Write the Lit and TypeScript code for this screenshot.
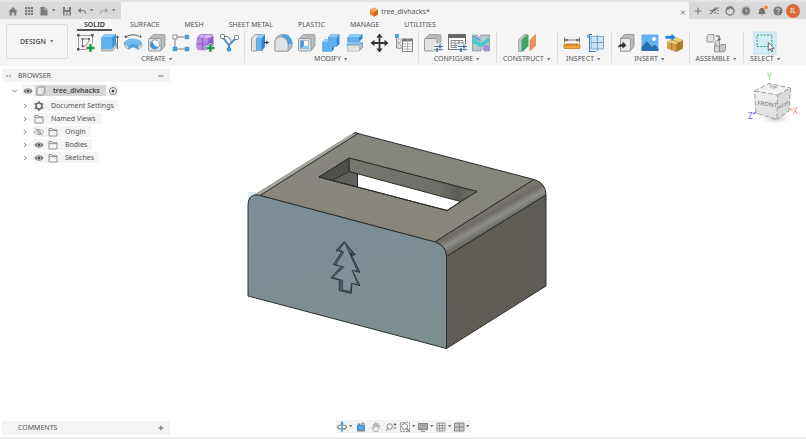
import { LitElement, html, svg, css } from "lit";
import { customElement } from "lit/decorators.js";

const icon = (size: number, body: unknown) =>
  html`<svg width=${size} height=${size} viewBox="0 0 ${size} ${size}" fill="none" aria-hidden="true">${body}</svg>`;

const caret = html`<svg class="caret" width="5" height="3" viewBox="0 0 5 3" aria-hidden="true"><path d="M1 0h3.4L2.7 2.4z" fill="#777" /></svg>`;

/* ---- ribbon icons, 24 x 24 ---- */
const plusBadge = svg`<path d="M17.5 13v8M13.5 17h8" stroke="#1f9a48" stroke-width="2.4"/>`;
const greyBox = svg`
  <path d="M4 8l4-4.5h10.5c1 0 1.5.5 1.5 1.5v10l-4 4.5z" fill="#b9bdc0" stroke="#85898c" stroke-width=".7"/>
  <rect x="3.5" y="7.5" width="12.5" height="12.5" rx="1" fill="#dfe1e2" stroke="#85898c" stroke-width=".8"/>`;

const ribbonIcons: Record<string, unknown> = {
  sketch: svg`<path d="M5.500 4.500h14M5.500 4.500v14h8M19.500 4.500v8" stroke="#888" stroke-width=".8"/>
    <path d="M9.500 15.500v-7.500h6.500c0 4-2.500 7-6.500 7.500z" stroke="#666" stroke-width=".8"/>
    <g fill="#555"><path d="M4 3h2.500v2.500H4zM18.200 3h2.500v2.500h-2.500zM4 17h2.500v2.500H4zM8.700 7h1.800v1.800H8.700zM8.700 14.500h1.800v1.800H8.700zM15 7h1.800v1.800H15z"/></g>${plusBadge}`,
  extrude: svg`<path d="M4.500 15.500v4.500h11l4-4v-4z" fill="#c7cacc" stroke="#888" stroke-width=".6"/>
    <path d="M4.500 6.500l3-3.500h11.500v10l-3.800 4.500H4.500z" fill="#3b93d8"/>
    <rect x="4.500" y="6.300" width="10.800" height="11.300" fill="#5fb1ee"/><path d="M4.500 6.300l3-3.300H19l-3.700 3.300z" fill="#8ccaf5"/>
    <path d="M20.500 5v13M19.300 6.800l1.200-2.200 1.200 2.200" stroke="#444" stroke-width=".8"/>`,
  revolve: svg`<path d="M3 13c1-7 17-7 18 0l-4 6c-2-3-6-3.500-9-.5z" fill="#4c9fe0"/>
    <path d="M3 12.500c1-6.500 17-6.500 18 0l-3.800 2.800c-3-3.300-7.500-3-9.600.2z" fill="#72bbf0"/>
    <path d="M3 12.500l4.600 3 .4 3L4 16z" fill="#d7d9db" stroke="#888" stroke-width=".5"/><path d="M21 12.500l-4 3v3.500l3.500-3z" fill="#d7d9db" stroke="#888" stroke-width=".5"/>
    <path d="M4 6.500c4-3.500 12-3.500 16 0M4 6.500l.4-2.200M4 6.500l2.400-.2M20 6.500l-.4-2.200" stroke="#444" stroke-width=".9"/>`,
  hole: svg`${greyBox}<circle cx="9.800" cy="13.500" r="4.600" fill="#fff" stroke="#777" stroke-width=".7"/>
    <path d="M7.600 10a4.300 4.300 0 1 0 6 5.600c-3 .4-5.600-2-6-5.600z" fill="#3c96db"/>`,
  pattern: svg`<path d="M8 6h8M6 8v8M8 18h8" stroke="#777" stroke-width=".9"/>
    <rect x="4" y="4" width="4" height="4" fill="#fff" stroke="#777" stroke-width=".8"/>
    <g fill="#4ba3e4" stroke="#2e7fc0" stroke-width=".4"><path d="M16 4h4v4h-4zM4 16h4v4H4zM16 16h4v4h-4z"/></g>`,
  form: svg`<path d="M4 8c1-4 3-5 7-5h6c3 0 3.500 1.500 3.500 4v6c0 4-3 5.500-6 6H7c-3 0-3.500-2-3.500-5z" fill="#8d5cc8"/>
    <rect x="3.800" y="7.200" width="11.600" height="12" rx="2.500" fill="#b58ae2"/>
    <path d="M5 6.500C7 4 9 3.600 12 3.600h5c1.500 0 2.600.6 2.800 1.600L15.500 7.400z" fill="#d3b7f0"/>
    <path d="M9.600 7.200v12M3.800 13h11.600M15.400 13l5-2.500M12 3.600L9.600 7.200" stroke="#7a46b6" stroke-width=".6"/>
    <path d="M17.500 12.500v8.500M13.300 16.800h8.500" stroke="#fff" stroke-width="3.400"/>${plusBadge}`,
  derive: svg`<path d="M5.500 6l5 6.500c.8 1.500 2.200 1.500 3 0L19.500 6.500M12 13v5" stroke="#4a90cc" stroke-width="2"/>
    <path d="M7.500 5.500h3.500l3.500 5" stroke="#555" stroke-width=".8"/>
    <g fill="#fff" stroke="#555" stroke-width=".8"><rect x="3.500" y="3.500" width="4" height="4" rx="1"/><rect x="17.500" y="4.500" width="4" height="4" rx="1"/></g>
    <circle cx="12" cy="18.500" r="1.900" fill="#4ba3e4" stroke="#2e6ea8" stroke-width=".6"/>`,
  pressPull: svg`<path d="M4.500 7l3.500-3.500h5L9.500 8v12h-5z" fill="#dfe1e2" stroke="#85898c" stroke-width=".8"/>
    <path d="M9.500 7.500L12.500 3.500H18v12L15 20H9.500z" fill="#2f86cc"/><path d="M9.500 7.500h5V20h-5z" fill="#62b2ee"/><path d="M9.500 7.500l3-4H18l-3.500 4z" fill="#8ccaf5"/>
    <path d="M16.500 11.500h4" stroke="#333" stroke-width="1"/><path d="M19.300 9.500l2.700 2-2.700 2z" fill="#333"/>`,
  fillet: svg`<path d="M4 20v-9c0-4 3.500-7.500 7.500-7.500l5.500.7 4 7v4.500L17.500 20z" fill="#b9bdc0" stroke="#85898c" stroke-width=".8"/>
    <path d="M4 20v-8.500C4 8 6.500 6 9.500 6c4 0 7.500 3 7.500 7.500V20z" fill="#e0e2e3" stroke="#85898c" stroke-width=".6"/>
    <path d="M9.500 5.500L13 3.200c5 0 8.500 4.800 8.500 9.300L17 13.500c0-4.500-3.500-8-7.500-8z" fill="#4ba3e4"/>`,
  shell: svg`${greyBox}<rect x="5.700" y="9.800" width="8" height="8" fill="#fff" stroke="#888" stroke-width=".6"/>
    <path d="M5.700 9.800h3v5h5v3h-8z" fill="#8ccaf5"/><path d="M5.700 17.800l3-3.500v-4.500h-3z" fill="#3c96db"/>`,
  combine: svg`<path d="M3.500 11l2.500-3h3V6l2.500-2.500H20.500V13L18 15.500h-3V18l-2 2.500H3.500z" fill="#2f86cc"/>
    <path d="M3.500 11H9V6.500h8.800v9H13v5H3.500z" fill="#5dafed"/><path d="M9 6.500l2.500-3h9l-2.700 3zM3.500 11L6 8h3v3z" fill="#8ccaf5"/>`,
  split: svg`<path d="M4.500 14.500L7 12.500h12.500v4L16 20H4.500z" fill="#b9bdc0" stroke="#85898c" stroke-width=".7"/><path d="M4.500 14.800H16V20H4.500z" fill="#e0e2e3"/>
    <path d="M4.500 6.500l3-3.500h12v4.200L16 11H4.500z" fill="#2f86cc"/><path d="M4.500 6.500H16V11H4.500z" fill="#5dafed"/><path d="M4.500 6.500l3-3.500h12L16 6.500z" fill="#8ccaf5"/>
    <path d="M3.500 13.300L5.500 11.500h14.500L17 13.800H3.500z" fill="#8ccaf5" stroke="#4b90c4" stroke-width=".5"/>`,
  move: svg`<path d="M12.500 5v14M5.500 12h14" stroke="#333" stroke-width="1.800"/>
    <path d="M12.500 2.500l3.200 4H9.300zM12.500 21.500l3.200-4H9.300zM3.500 12l4-3.200v6.400zM21.500 12l-4-3.200v6.400z" fill="#333"/>`,
  params: svg`<path d="M5.500 7v10h6M5.500 12h4" stroke="#777" stroke-width=".8"/>
    <rect x="4" y="3" width="4" height="4" fill="#4ba3e4"/><rect x="7" y="8" width="3" height="3" fill="#fff" stroke="#888" stroke-width=".6"/><rect x="7" y="14" width="3" height="3" fill="#fff" stroke="#888" stroke-width=".6"/>
    <rect x="11.500" y="8" width="10" height="12.500" fill="#fff" stroke="#777" stroke-width=".9"/><path d="M11.500 8h10v2.500h-10z" fill="#777"/>
    <path d="M16.500 8v12.500M11.500 13h10M11.500 15.500h10M11.500 18h10" stroke="#999" stroke-width=".7"/>`,
  configBody: svg`${greyBox}<path d="M12.500 12.500h10v9h-10z" fill="#f5f5f5" opacity=".8"/><path d="M13 15.500h9M13 18.800h9" stroke="#4b6f90" stroke-width="1.100"/><path d="M19 13.500v4M16 17v4" stroke="#4b6f90" stroke-width="1.500"/>`,
  configTable: svg`<rect x="3.500" y="3.500" width="17" height="15" fill="#fff" stroke="#666" stroke-width=".9"/><path d="M3.500 3.500h17V7h-17z" fill="#666"/>
    <path d="M6 9.500h12M6 12h12M6 14.500h8M6 9.500v7h6M10 9.500v7M14 9.500v4M18 9.500v4" stroke="#666" stroke-width=".7"/>
    <path d="M12.500 13h10v8h-10z" fill="#f5f5f5" opacity=".9"/><path d="M13 15.500h9M13 18.800h9" stroke="#4b6f90" stroke-width="1.100"/><path d="M19 13.500v4M16 17v4" stroke="#4b6f90" stroke-width="1.500"/>`,
  configTheme: svg`<path d="M3.500 4h5c-1 3 4 3 3 0h9v16H15c1-3-4-3-3 0H3.500z" fill="#bcc7cc" stroke="#7d8a90" stroke-width=".7"/>
    <path d="M3.500 8c5-2 4.500 4 8.500 3.500 4-.5 4-5 8.500-4v4c-5 0-4 4.500-8.500 4.500-4 0-4-4-8.500-3z" fill="#4cc5cb"/><circle cx="17.500" cy="17" r="3" fill="#a988dd"/><path d="M3.500 6c4.500-1 5.500 4 8.500 3" stroke="#3c96db" stroke-width="1.200"/>`,
  plane: svg`<path d="M3.500 9L9 3.500h2.500V15L6 20.500H3.500z" fill="#c2c6c8" stroke="#85898c" stroke-width=".6"/><path d="M6.500 9l5.500-5.500h1.500V15L8 20.500H6.500z" fill="#3fa56a"/>
    <path d="M15 9l5.500-5.500V14.500L15 20z" fill="#e8935c" stroke="#c9733b" stroke-width=".5"/>`,
  measure: svg`<path d="M4.500 9h15M4.500 6.500v5M19.500 6.500v5" stroke="#555" stroke-width=".8"/><path d="M4.500 9l3-1.500v3zM19.500 9l-3-1.500v3z" fill="#555"/>
    <path d="M4 13h16v4.500H4z" fill="#f2a73a" stroke="#b9761d" stroke-width=".7"/><path d="M6.500 13v2M9 13v2M11.500 13v2M14 13v2M16.500 13v2" stroke="#8b5510" stroke-width=".6"/>`,
  section: svg`<path d="M7 5.500h12.500V18H7z" fill="#cfe6f7" stroke="#6d97b5" stroke-width=".8"/><path d="M7 11.500h12.500M13.300 3.500V20" stroke="#6d97b5" stroke-width=".9"/>
    <path d="M8 3.500H5.500v17H8M4 7V3.500M12 20.500h-4" stroke="#2f86cc" stroke-width="1.100"/>`,
  insertPart: svg`<path d="M6.500 7.500l4-4h9.500v12L16 20H6.500z" fill="#b9bdc0" stroke="#85898c" stroke-width=".8"/><rect x="6.500" y="7.500" width="9.800" height="12.500" fill="#e8eaeb" stroke="#85898c" stroke-width=".7"/>
    <path d="M4 16.500c.5-3 2-3.500 4.500-3.500v-2.500l4 3.700-4 3.600v-2c-2 0-3.500-.3-4.500.7z" fill="#333"/>`,
  picture: svg`<rect x="3.500" y="3.500" width="17" height="16.500" fill="#62b2ee"/><circle cx="16" cy="8" r="1.900" fill="#fff"/>
    <path d="M3.500 16l5.500-6 5 6 2.500-2.500 4 4V20h-17z" fill="#2a6fae"/>`,
  insertBox: svg`<path d="M5 10.500L13 6l8 3v8.500l-7 3.500-9-3.500z" fill="#d0a04c"/><path d="M5 10.500L13 6l8 3-7 4z" fill="#efcf84"/><path d="M14 13l7-4v8.500L14 21z" fill="#b3822e"/><path d="M8.500 8.500l8.500 3v7.500M9.500 12v7" stroke="#8a5e16" stroke-width=".5"/>
    <path d="M3.500 4.800h6v-2l4 3.500-4 3.500v-2h-6z" fill="#2386d2"/>`,
  assemble: svg`<path d="M3 5l1.500-1.500h5.500v6L8.500 11H3z" fill="#dfe1e2" stroke="#777" stroke-width=".7"/><path d="M12 5h3.200v4M13.800 7.500L15.200 9.500l1.400-2" stroke="#444" stroke-width=".9"/>
    <path d="M10.500 15h5v5.800h-5zM11 15V11l1.500-1.500h3V15" fill="#d6d8d9" stroke="#777" stroke-width=".7"/><path d="M15.500 15l1.500-1.500h4.500v5.500L20 20.800h-4.500z" fill="#c4c7c9" stroke="#777" stroke-width=".7"/>`,
  select: svg`<rect x="1" y="1" width="22" height="22" fill="#d5edf6" stroke="#b5dceb" stroke-width=".8"/>
    <rect x="4" y="4" width="15" height="11.500" stroke="#2d9b5a" stroke-width="1" stroke-dasharray="2 1.300"/>
    <path d="M15.300 11.500v8l2-1.700 1.300 2.900 1.300-.6-1.300-2.800h2.600z" fill="#fff" stroke="#444" stroke-width=".8"/>`,
};

/* ---- small chrome icons ---- */
const G = "#7c7c7c";
const chrome: Record<string, unknown> = {
  home: svg`<path d="M1.500 6.500L6 2l4.500 4.500h-1.200V10.500H7.200V7.500H4.800v3H2.700v-4z" fill=${G}/>`,
  grid: svg`<path d="M2 2h2.200v2.200H2zM4.900 2h2.200v2.200H4.900zM7.800 2H10v2.200H7.800zM2 4.900h2.200v2.200H2zM4.900 4.900h2.200v2.200H4.900zM7.800 4.900H10v2.200H7.800zM2 7.800h2.200V10H2zM4.900 7.800h2.200V10H4.900zM7.800 7.800H10V10H7.800z" fill=${G}/>`,
  file: svg`<path d="M2.500 2h4v3h3v5.500h-7zM7.200 2l2.300 2.400H7.200z" fill=${G}/>`,
  save: svg`<path d="M2 2h8v8.500H2z" fill=${G}/><path d="M4 2h4v3H4zM3.500 7h5v3.500h-5z" fill="#d9d9d9"/><path d="M4.500 8.200h3M4.500 9.400h3M6.500 2.500v1.800" stroke=${G} stroke-width=".7"/>`,
  undo: svg`<path d="M3 5.500h4c2 0 2.500 1.200 2.500 3.500" stroke=${G} stroke-width="1.200"/><path d="M1.500 5.500L5 2.800v5.400z" fill=${G}/>`,
  redo: svg`<path d="M9 5.500H5C3 5.500 2.500 6.700 2.500 9" stroke="#aaa" stroke-width="1.200"/><path d="M10.500 5.500L7 2.800v5.400z" fill="#aaa"/>`,
  plus: svg`<path d="M6 2.500v7M2.500 6h7" stroke="#777" stroke-width="1.100"/>`,
  extensions: svg`<path d="M1.500 5.500h3L8 2.500M2 9l3.500-3 5-3.500M6.500 8.500L8 7M9.500 6l1-1M9 8.500h1.500" stroke="#777" stroke-width="1.100"/>`,
  support: svg`<circle cx="6" cy="6" r="4" stroke="#777" stroke-width="1.300"/><path d="M2.500 5C5 5 6 4 6.500 2.500 7.500 4.500 9 5 9.800 5 9.500 2 7.500 1.500 6 1.500S2.500 3 2.500 5z" fill="#777"/>`,
  clock: svg`<circle cx="6" cy="6" r="4.800" fill="#adadad"/><circle cx="6" cy="6" r="3.400" fill="#777"/><path d="M6 4v2.300h1.700" stroke="#eee" stroke-width=".8"/>`,
  bell: svg`<path d="M2 9c1-1 1.200-2 1.200-3.500C3.200 4 4.400 2.700 6 2.700S8.800 4 8.800 5.500C8.800 7 9 8 10 9zM5 9.600h2c0 1.200-2 1.200-2 0z" fill="#777"/><circle cx="10" cy="2.300" r="1.900" fill="#f0884a"/>`,
  help: svg`<circle cx="6" cy="6" r="4.600" fill="#777"/><path d="M4.600 5c0-2 2.900-1.800 2.900-.2C7.500 6 6 5.800 6 7.200M6 8.100v1" stroke="#eee" stroke-width="1"/>`,
  close: svg`<path d="M4 4.500l4 4M8 4.500l-4 4" stroke="#666" stroke-width=".9"/>`,
  cube: svg`<path d="M2 3.700L6 1.500l4 2.200v4.800L6 10.700 2 8.500z" fill="#e8862f"/><path d="M2 3.700L6 1.500l4 2.200L6 6z" fill="#f7b26b"/><path d="M6 6l4-2.300v4.800l-4 2.200z" fill="#cd6a1b"/>`,
  eye: svg`<path d="M1.500 6C3.500 2.300 8.500 2.300 10.500 6 8.500 9.700 3.500 9.700 1.500 6z" fill="#777"/><circle cx="6" cy="6" r="2" stroke="#ddd" stroke-width=".8" fill="#555"/>`,
  eyeOff: svg`<path d="M1.500 6C3.500 2.600 8.500 2.600 10.500 6 8.500 9.400 3.500 9.400 1.500 6z" stroke="#999" stroke-width=".9"/><circle cx="6" cy="6" r="1.500" stroke="#999" stroke-width=".8"/><path d="M2.500 2.500l7 7" stroke="#999" stroke-width=".9"/>`,
  body: svg`<path d="M2 4.200L3.800 2h6v5.800L8 10H2z" stroke="#888" stroke-width=".9" fill="#e8e8e8"/><path d="M8 10V4.500" stroke="#aaa" stroke-width=".6"/>`,
  gear: svg`<circle cx="6" cy="6" r="2.900" stroke="#6f6f6f" stroke-width="1.500"/><path d="M6 1.300v1.900M6 8.800v1.900M1.900 3.600l1.700 1M8.400 7.400l1.700 1M1.900 8.400l1.700-1M8.400 4.600l1.700-1" stroke="#6f6f6f" stroke-width="1.700"/>`,
  folder: svg`<path d="M2 10V2.500h3l1 1.300h4V10zM2 4.600h8" stroke="#8a8a8a" stroke-width=".9"/>`,
  open: svg`<path d="M3.300 4.800l2.200 2.200 2.200-2.200" stroke="#666" stroke-width=".9"/>`,
  shut: svg`<path d="M5 3.800L7.200 6 5 8.200" stroke="#777" stroke-width=".9"/>`,
  radio: svg`<circle cx="6" cy="6" r="3.500" stroke="#555" stroke-width=".8" fill="#fff"/><circle cx="6" cy="6" r="1.500" fill="#444"/>`,
  collapse: svg`<path d="M5.500 4.500L4 6l1.500 1.500zM8.500 4.500L7 6l1.500 1.500z" fill="#777"/>`,
  minus: svg`<path d="M3.500 6h5" stroke="#666" stroke-width="1"/>`,
  add: svg`<path d="M6 3.500v5M3.500 6h5" stroke="#666" stroke-width="1"/>`,
  orbit: svg`<ellipse cx="6" cy="6" rx="4.500" ry="2" stroke="#777" stroke-width="1.100"/><path d="M6 1v10M4.800 2.500L6 1l1.200 1.500" stroke="#3f92cf" stroke-width="1.200"/>`,
  look: svg`<path d="M2 4h1V2.500h2.500V4H10v6H2z" fill="#4793cc"/><path d="M7 4V2h2v2M2 10h8" stroke="#777" stroke-width=".9"/><path d="M3.500 5.500h5v3h-5z" fill="#5fa9dd"/>`,
  hand: svg`<path d="M4 10.500L1.800 7 2.500 6.200 4 7.500 3.300 3.300l.8-.3 1 3V2l.9-.2.500 4 .8-3.500.9.200-.5 4L9 4l.8.400-1.300 4.200-1 1.900z" stroke="#999" stroke-width=".7" fill="#eee"/>`,
  zoom: svg`<circle cx="4.700" cy="5.500" r="2.700" stroke="#888" stroke-width="1"/><path d="M2.800 7.600L1 10M8.500 3.500h3M10 2v3M8.500 7h3" stroke="#777" stroke-width="1"/>`,
  fit: svg`<path d="M1.500 1.500h9v9h-9z" stroke="#888" stroke-width=".9" stroke-dasharray="2 .8"/><circle cx="5.600" cy="5.500" r="2.900" stroke="#777" stroke-width=".9" fill="#fff"/><path d="M7.500 7.500l2.800 2.800" stroke="#777" stroke-width="1.200"/>`,
  display: svg`<path d="M1.500 2.500h9v6.200h-9zM4 10.300h4" fill="#a3a7aa" stroke="#7b7f82" stroke-width=".9"/>`,
  gridView: svg`<path d="M2 2h8v8H2zM4.700 2v8M7.300 2v8M2 4.700h8M2 7.300h8" stroke="#808080" stroke-width=".8"/>`,
  viewports: svg`<path d="M1.500 2h9.500v8H1.500z" fill="#c9ccce" stroke="#808080" stroke-width=".9"/><path d="M6.200 2v8M1.500 6H11" stroke="#808080" stroke-width=".9"/>`,
};

const base = css`
  :host { font-family: "Noto Sans", "Open Sans", sans-serif; font-size: 7px; line-height: 10px; color: #555; }
  button { font: inherit; color: inherit; background: none; border: 0; padding: 0; margin: 0; display: flex; align-items: center; justify-content: center; }
  svg { display: block; flex: none; }
  ul { list-style: none; margin: 0; padding: 0; }
`;

@customElement("title-bar")
class TitleBar extends LitElement {
  static styles = [base, css`
    :host { display: block; background: #d9d9d9; border-top: 2px solid #e4e4e4; }
    .bar { display: flex; height: 17px; }
    .left { display: flex; align-items: center; padding: 0 2px 0 5px; }
    .left button, .right button { width: 16px; height: 16px; }
    .left .split { width: 22px; justify-content: flex-start; gap: 1px; padding-left: 1px; }
    .tab { flex: 1; display: flex; align-items: center; background: #f5f5f5; padding-top: 2px; }
    .name { flex: 1; display: flex; align-items: center; justify-content: center; gap: 1px; color: #555; }
    .right { display: flex; align-items: center; padding: 0 6px 0 1px; }
    .right .avatar { width: 14px; height: 14px; border-radius: 50%; background: #d86c38; color: #fff; }
  `];
  render() {
    const b = (n: string) => html`<button aria-label=${n}>${icon(12, chrome[n])}</button>`;
    const s = (n: string) => html`<button class="split" aria-label=${n}>${icon(12, chrome[n])}${caret}</button>`;
    return html`<header class="bar">
      <div class="left">${b("home")}${b("grid")}${s("file")}${b("save")}${s("undo")}${s("redo")}</div>
      <div class="tab"><span class="name">${icon(12, chrome.cube)}tree_divhacks*</span>
        <button aria-label="close">${icon(12, chrome.close)}</button></div>
      <div class="right">${["plus", "extensions", "support", "clock", "bell", "help"].map(b)}<button class="avatar">IL</button></div>
    </header>`;
  }
}

const tabs = ["SOLID", "SURFACE", "MESH", "SHEET METAL", "PLASTIC", "MANAGE", "UTILITIES"];
const groups: [string, string[]][] = [
  ["CREATE", ["sketch", "extrude", "revolve", "hole", "pattern", "form", "derive"]],
  ["MODIFY", ["pressPull", "fillet", "shell", "combine", "split", "move", "params"]],
  ["CONFIGURE", ["configBody", "configTable", "configTheme"]],
  ["CONSTRUCT", ["plane"]],
  ["INSPECT", ["measure", "section"]],
  ["INSERT", ["insertPart", "picture", "insertBox"]],
  ["ASSEMBLE", ["assemble"]],
  ["SELECT", ["select"]],
];

@customElement("tool-ribbon")
class ToolRibbon extends LitElement {
  static styles = [base, css`
    :host { display: block; background: #f5f5f5; }
    .ribbon { display: flex; gap: 3px; padding: 1px 0 3px 6px; }
    .design { width: 62px; height: 35px; margin-top: 4px; border: 1px solid #dcdcdc; border-radius: 2px; font-weight: 600; gap: 3px; }
    .tabs { display: flex; gap: 11px; padding-left: 6px; }
    .tabs button { padding: 0 7px; height: 11px; border-bottom: 2px solid transparent; }
    .tabs .active { font-weight: 600; color: #333; border-color: #555; }
    .groups { display: flex; }
    .group { display: flex; flex-direction: column; align-items: center; padding: 0 3px 0 2px; border-right: 1px solid #dedede; }
    .group:last-child { border: 0; }
    .single { padding: 0 6px; }
    .icons { display: flex; }
    .label { gap: 2px; height: 8px; }
  `];
  render() {
    return html`<nav class="ribbon">
      <button class="design">DESIGN ${caret}</button>
      <div>
        <div class="tabs" role="tablist">${tabs.map((t, i) => html`<button role="tab" class=${i ? "" : "active"}>${t}</button>`)}</div>
        <div class="groups">${groups.map(([name, list]) => html`
          <div class="group ${list.length === 1 ? "single" : ""}">
            <div class="icons">${list.map((n) => html`<button aria-label=${n}>${icon(24, ribbonIcons[n])}</button>`)}</div>
            <button class="label">${name}${caret}</button>
          </div>`)}</div>
      </div>
    </nav>`;
  }
}

interface Row { name: string; icon: string; eye?: string; }
const rows: Row[] = [
  { name: "Document Settings", icon: "gear" },
  { name: "Named Views", icon: "folder" },
  { name: "Origin", icon: "folder", eye: "eyeOff" },
  { name: "Bodies", icon: "folder", eye: "eye" },
  { name: "Sketches", icon: "folder", eye: "eye" },
];

@customElement("browser-panel")
class BrowserPanel extends LitElement {
  static styles = [base, css`
    :host { display: block; width: 168px; }
    .head { display: flex; align-items: center; height: 13px; background: #f4f4f4; padding-right: 3px; }
    .head span { flex: 1; padding-left: 4px; }
    .root, .row { display: flex; align-items: center; height: 13px; }
    .root { height: 15px; padding: 1px 0 0 7px; }
    ul { padding-top: 1px; }
    .row { padding-left: 17px; }
    .chip { display: flex; align-items: center; height: 11px; background: #f4f4f4; gap: 2px; margin-left: 2px; padding-right: 5px; }
    .row .chip span { padding-left: 4px; }
    .root .chip { padding-right: 0; margin-left: 1px; gap: 1px; }
    .name { display: flex; align-items: center; gap: 6px; height: 11px; padding-right: 6px; background: #d6d6d6; font-weight: 600; color: #444; }
  `];
  render() {
    const b = (n: string) => html`<button aria-label=${n}>${icon(12, chrome[n])}</button>`;
    return html`<section>
      <div class="head">${b("collapse")}<span>BROWSER</span>${b("minus")}</div>
      <div class="root">${b("open")}<div class="chip">${b("eye")}<span class="name">${icon(12, chrome.body)}tree_divhacks</span>${b("radio")}</div></div>
      <ul>${rows.map((r) => html`<li class="row">${b("shut")}<div class="chip">${r.eye ? b(r.eye) : ""}${icon(12, chrome[r.icon])}<span>${r.name}</span></div></li>`)}</ul>
    </section>`;
  }
}

@customElement("model-view")
class ModelView extends LitElement {
  static styles = [base, css`
    :host, svg { display: block; width: 100%; height: 100%; }
    .face { font-size: 6px; fill: #8d8d8d; font-weight: 600; }
    .top { font-size: 4px; fill: #8d8d8d; font-weight: 600; }
    .axis { font-size: 8px; }
  `];
  render() {
    return html`<svg viewBox="0 66 806 373" role="img" aria-label="Box with slot and tree cutout">
      <defs>
        <linearGradient id="front" x1="0" y1="0" x2=".3" y2="1"><stop offset="0" stop-color="#7b8e97" /><stop offset="1" stop-color="#7e8d90" /></linearGradient>
        <linearGradient id="top" x1="0" y1="1" x2="1" y2="0"><stop offset="0" stop-color="#8a867d" /><stop offset="1" stop-color="#84857d" /></linearGradient>
        <linearGradient id="side" x1="0" y1="0" x2="0" y2="1"><stop offset="0" stop-color="#5d5c54" /><stop offset="1" stop-color="#605c55" /></linearGradient>
        <linearGradient id="round" gradientUnits="userSpaceOnUse" x1="484" y1="211" x2="493" y2="227"><stop offset="0" stop-color="#7c7871" /><stop offset=".3" stop-color="#706a62" /><stop offset=".65" stop-color="#8c8f8c" /><stop offset="1" stop-color="#6d6c64" /></linearGradient>
        <linearGradient id="inner" x1="0" y1="0" x2="1" y2="0"><stop offset="0" stop-color="#77776f" /><stop offset=".7" stop-color="#6f6f6a" /><stop offset=".85" stop-color="#5c5b56" /><stop offset="1" stop-color="#74746d" /></linearGradient>
        <linearGradient id="cubeFront" x1="0" y1="0" x2="0" y2="1"><stop offset="0" stop-color="#f0f0f0" /><stop offset="1" stop-color="#dedede" /></linearGradient>
        <radialGradient id="shade"><stop offset="0" stop-color="#999" /><stop offset="1" stop-color="#fff" stop-opacity="0" /></radialGradient>
      </defs>
      <g stroke="#2c2e2c" stroke-width="1" stroke-linejoin="round">
        <path d="M248 192h8v4l-8 5z" fill="#dcebf4" stroke="none" />
        <path d="M254 195L352 134q3-2 7-.5L260 195.500z" fill="#a6a6a0" stroke="#8b8b87" stroke-width=".6" />
        <path d="M353 133.500q2-1.500 6 0" fill="none" />
        <path fill-rule="evenodd" d="M260 195.500L358 133.500 534 179.500 435 242zM319 177L447 210.500 477 191.500 349 158z" fill="url(#top)" />
        <path d="M349 158L477 191.500 460.500 201.500 349 171.500z" fill="url(#inner)" />
        <path d="M319 177L349 158V171.500L332 180.500z" fill="#504f4a" />
        <path d="M332 180.500L349 171.500 357.500 174V187z" fill="#62615b" />
        <path d="M319 177L447 210.500 460.500 201.500" fill="none" />
        <path d="M435 242L534 179.500Q546 183 546 195L446.500 256.500Q446 245 435 242z" fill="url(#round)" />
        <path d="M446.500 256.500L546 195V286L446.500 348.500z" fill="url(#side)" />
        <path d="M248 296V205Q248 194 258 195L435 242Q446.500 246 446.500 257V348.500z" fill="url(#front)" />
      </g>
      <g transform="translate(230 230) scale(.3333)" stroke="#1d2b2f" stroke-width="2.500" stroke-linejoin="miter">
        <path d="M343 35L376 75 362 70 390 127 366 121 390 167 366 160 364 190 328 182V150L303 144 335 108 310 104 336 64 318 62z" fill="#4a5e66" />
        <path d="M344 39L359 72 371 77 360 73 381 123 366 121 383 163 364 160 361 184 338 179V151L309 142 343 111 318 104 342 66 328 59z" fill="#80919a" stroke-width="1.500" />
      </g>
      <g>
        <ellipse cx="775" cy="118" rx="18" ry="7" fill="url(#shade)" opacity=".7" />
        <path d="M769 91V83" stroke="#6fdc76" stroke-width="1" /><path d="M787 108l6 2" stroke="#f08080" stroke-width="1" /><path d="M757 112l-4 2" stroke="#7b7be8" stroke-width="1.500" />
        <path d="M754.500 91L777.500 95 777 119.500 756 113z" fill="url(#cubeFront)" />
        <path d="M777.500 95L790.500 88 789 111 777 119.500z" fill="#dadada" />
        <path d="M754.500 91L769 83.500 790.500 88 777.500 95z" fill="#f2f2f2" />
        <path d="M754.500 91L777.500 95 777 119.500 756 113zM777.500 95L790.500 88 789 111 777 119.500M754.500 91L769 83.500 790.500 88" fill="none" stroke="#8a8a8a" stroke-width=".8" stroke-dasharray="5 2" />
        <text class="face" transform="translate(757 105) rotate(7)">FRONT</text>
        <text class="top" transform="translate(769 88) rotate(8)">TOP</text>
        <text class="top" transform="translate(779 109) rotate(-28)">RIGHT</text>
        <text class="axis" x="767" y="80" fill="#6fdc76">Y</text><text class="axis" x="793" y="114" fill="#f08080">X</text><text class="axis" x="748" y="119" fill="#6a6af0">Z</text>
      </g>
    </svg>`;
  }
}

@customElement("status-row")
class StatusRow extends LitElement {
  static styles = [base, css`
    :host { display: block; border-bottom: 2px solid #ededed; }
    .foot { display: grid; grid-template-columns: 1fr auto 1fr; align-items: center; padding: 0 2px 1px; }
    .comments { display: flex; align-items: center; justify-content: space-between; width: 168px; height: 14px; box-sizing: border-box; padding: 0 3px 0 16px; background: #f4f4f4; }
    .nav { display: flex; background: #f4f4f4; height: 13px; margin-bottom: 3px; }
    .nav button { width: 15px; }
    .nav .split { width: 18px; }
  `];
  render() {
    const items: [string, boolean][] = [["orbit", true], ["look", false], ["hand", false], ["zoom", false], ["fit", true], ["display", true], ["gridView", true], ["viewports", true]];
    return html`<footer class="foot">
      <div class="comments">COMMENTS<button aria-label="add comment">${icon(12, chrome.add)}</button></div>
      <div class="nav">${items.map(([n, more]) => html`<button class=${more ? "split" : ""} aria-label=${n}>${icon(12, chrome[n])}${more ? caret : ""}</button>`)}</div>
    </footer>`;
  }
}

@customElement("app-root")
class AppRoot extends LitElement {
  static styles = css`
    :host { display: flex; flex-direction: column; min-height: 100vh; background: #fff; }
    .stage { flex: 1; position: relative; display: flex; flex-direction: column; }
    .model { position: absolute; inset: 0; }
    .panel { position: relative; flex: 1; padding: 3px 2px; }
    .status { position: relative; }
  `;
  render() {
    return html`<title-bar></title-bar><tool-ribbon></tool-ribbon>
      <main class="stage">
        <model-view class="model"></model-view>
        <div class="panel"><browser-panel></browser-panel></div>
        <status-row class="status"></status-row>
      </main>`;
  }
}
